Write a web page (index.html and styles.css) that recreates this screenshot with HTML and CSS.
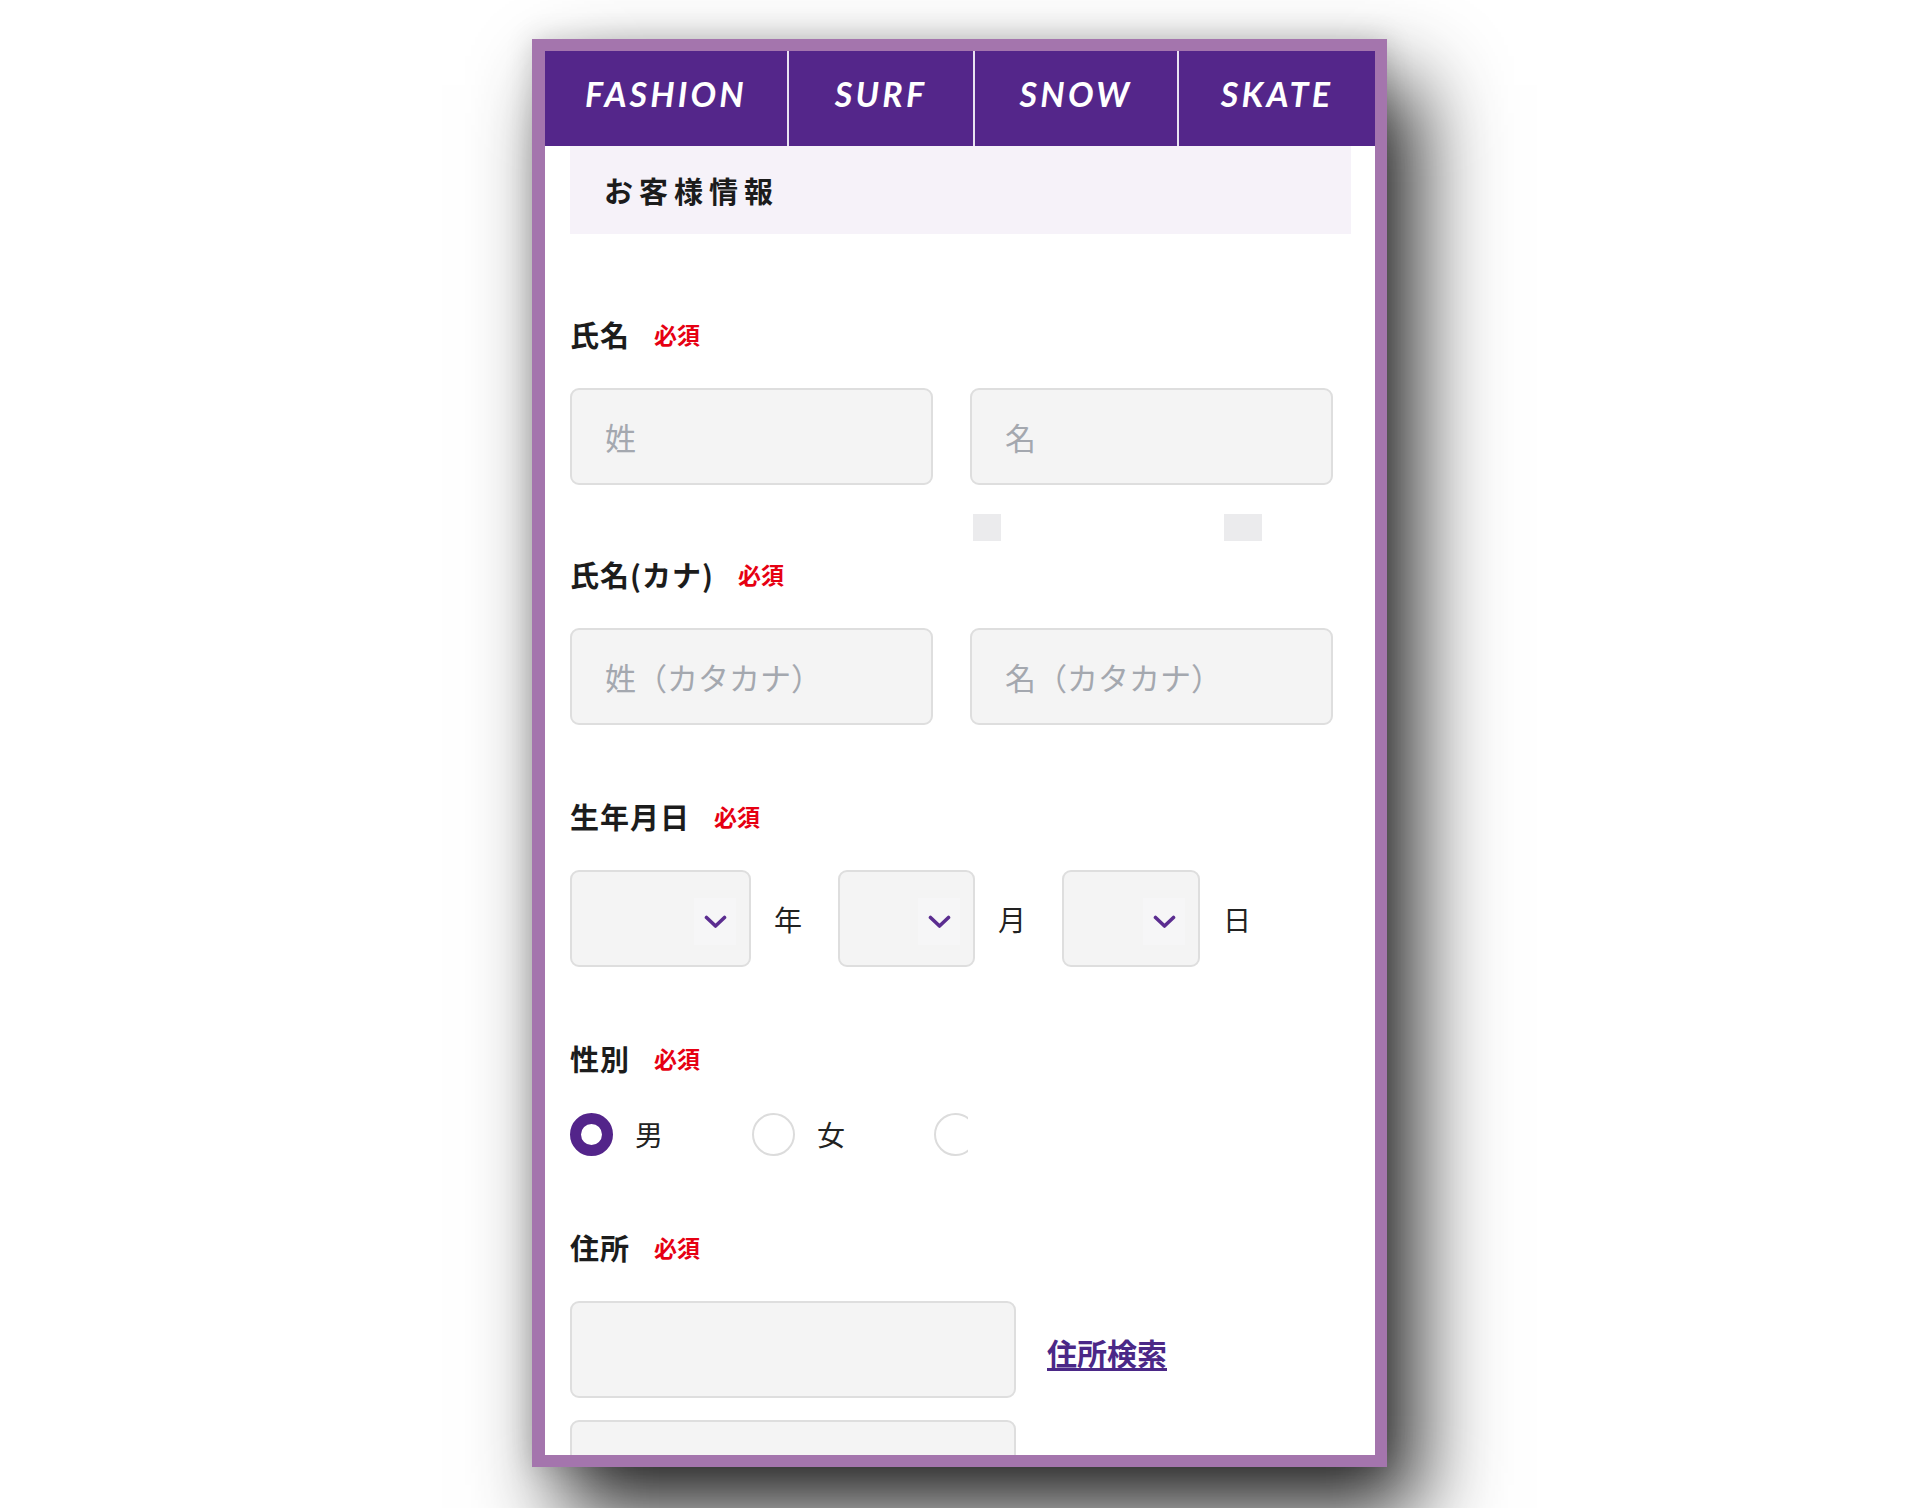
FILE: index.html
```html
<!DOCTYPE html>
<html lang="ja">
<head>
    <meta charset="UTF-8">
    <meta name="viewport" content="width=device-width, initial-scale=1.0">
    <title>お客様情報</title>
    <link rel="stylesheet" href="styles.css">
</head>
<body>
    <div class="page">
        <div class="frame">
            <nav class="nav">
                <a href="#">FASHION</a>
                <a href="#">SURF</a>
                <a href="#">SNOW</a>
                <a href="#">SKATE</a>
            </nav>

            <div class="content">
                <h2 class="section-title">お客様情報</h2>

                <div class="field field-first">
                    <p class="field-label">氏名<span class="req">必須</span></p>
                    <div class="row">
                        <input class="text-input" type="text" placeholder="姓">
                        <input class="text-input" type="text" placeholder="名">
                    </div>
                    <div class="marks">
                        <span class="mark mark-a"></span>
                        <span class="mark mark-b"></span>
                    </div>
                </div>

                <div class="field field-kana">
                    <p class="field-label">氏名(カナ)<span class="req">必須</span></p>
                    <div class="row">
                        <input class="text-input" type="text" placeholder="姓（カタカナ）">
                        <input class="text-input" type="text" placeholder="名（カタカナ）">
                    </div>
                </div>

                <div class="field">
                    <p class="field-label">生年月日<span class="req">必須</span></p>
                    <div class="row row-center">
                        <label class="select select-year">
                            <select><option></option></select>
                            <span class="chev"><svg width="23" height="14" viewBox="0 0 23 14"><polyline points="2.5,2.5 11.5,11 20.5,2.5" fill="none" stroke="#5b2d90" stroke-width="3.6" stroke-linecap="round" stroke-linejoin="round"/></svg></span>
                        </label>
                        <span class="unit">年</span>
                        <label class="select select-month">
                            <select><option></option></select>
                            <span class="chev"><svg width="23" height="14" viewBox="0 0 23 14"><polyline points="2.5,2.5 11.5,11 20.5,2.5" fill="none" stroke="#5b2d90" stroke-width="3.6" stroke-linecap="round" stroke-linejoin="round"/></svg></span>
                        </label>
                        <span class="unit">月</span>
                        <label class="select select-day">
                            <select><option></option></select>
                            <span class="chev"><svg width="23" height="14" viewBox="0 0 23 14"><polyline points="2.5,2.5 11.5,11 20.5,2.5" fill="none" stroke="#5b2d90" stroke-width="3.6" stroke-linecap="round" stroke-linejoin="round"/></svg></span>
                        </label>
                        <span class="unit unit-last">日</span>
                    </div>
                </div>

                <div class="field">
                    <p class="field-label">性別<span class="req">必須</span></p>
                    <div class="row radios">
                        <label class="radio-opt"><input type="radio" name="sex" checked>男</label>
                        <label class="radio-opt"><input type="radio" name="sex">女</label>
                        <label class="radio-opt radio-clip"><input type="radio" name="sex"></label>
                    </div>
                </div>

                <div class="field">
                    <p class="field-label">住所<span class="req">必須</span></p>
                    <div class="row row-center">
                        <input class="text-input address-input" type="text">
                        <a class="search-link" href="#">住所検索</a>
                    </div>
                    <input class="text-input address-input address-second" type="text">
                </div>
            </div>
        </div>
    </div>
</body>
</html>
```

FILE: styles.css
```css
body {
    margin: 0;
    background: #fff;
    font-family: "Noto Sans CJK JP", sans-serif;
    color: #1c1c1c;
}
.page {
    height: 1508px;
    padding: 39px 0 0 532px;
    box-sizing: border-box;
}
.frame {
    width: 830px;
    height: 1404px;
    border: 12px solid #a475ad;
    border-left-width: 13px;
    background: #fff;
    overflow: hidden;
    box-shadow: 30px 46px 80px rgba(0, 0, 0, 0.85), 0 0 26px rgba(0, 0, 0, 0.16);
}
.nav {
    display: grid;
    grid-template-columns: 242px 186px 204px 198px;
    height: 95px;
    background: #54268a;
}
.nav a {
    display: flex;
    align-items: center;
    justify-content: center;
    padding-bottom: 11px;
    border-left: 2px solid #e9e3f1;
    color: #fff;
    font: italic 700 34px "Lato", sans-serif;
    letter-spacing: 3.2px;
    text-decoration: none;
}
.nav a:first-child {
    border-left: 0;
}
.content {
    padding: 0 24px 0 25px;
}
.section-title {
    height: 88px;
    margin: 0;
    padding-left: 34px;
    background: #f6f2f9;
    font-size: 29px;
    font-weight: 700;
    line-height: 88px;
    letter-spacing: 6px;
}
.field {
    margin-top: 76px;
}
.field-first {
    margin-top: 85px;
}
.field-kana {
    margin-top: 18px;
}
.field-label {
    display: flex;
    align-items: center;
    height: 30px;
    margin: 0;
    font-size: 29px;
    font-weight: 700;
    letter-spacing: 1px;
}
.req {
    margin-left: 24px;
    font-size: 23px;
    color: #e60012;
    letter-spacing: 0;
}
.row {
    display: flex;
    margin-top: 39px;
}
.row-center {
    align-items: center;
}
.text-input {
    box-sizing: border-box;
    width: 363px;
    height: 97px;
    padding: 0 30px 0 33px;
    border: 2px solid #dedede;
    border-radius: 9px;
    background: #f4f4f4;
    font: 31px "Noto Sans CJK JP", sans-serif;
    color: #222;
    outline: none;
}
.text-input::placeholder {
    color: #a4a8af;
}
.text-input + .text-input {
    margin-left: 37px;
}
.marks {
    display: flex;
    height: 27px;
    margin-top: 29px;
    padding-left: 403px;
}
.mark {
    background: #ebebed;
}
.mark-a {
    width: 28px;
}
.mark-b {
    width: 38px;
    margin-left: 223px;
}

/* 生年月日 */
.select {
    position: relative;
    display: block;
    height: 97px;
}
.select-year {
    width: 181px;
}
.select-month {
    width: 137px;
}
.select-day {
    width: 138px;
}
.select select {
    box-sizing: border-box;
    width: 100%;
    height: 100%;
    border: 2px solid #dedede;
    border-radius: 9px;
    background: #f4f4f4;
    appearance: none;
    outline: none;
}
.chev {
    position: absolute;
    top: 28px;
    right: 15px;
    width: 42px;
    height: 47px;
    display: flex;
    align-items: center;
    justify-content: center;
    background: #f6f6f7;
}
.unit {
    margin: 0 36px 0 23px;
    font-size: 28px;
    color: #222;
}
.unit-last {
    margin-right: 0;
}

/* 性別 */
.radios {
    margin-top: 39px;
    height: 44px;
    align-items: center;
}
.radio-opt {
    display: flex;
    align-items: center;
    width: 182px;
    font-size: 28px;
    color: #222;
}
.radio-opt input {
    box-sizing: border-box;
    width: 43px;
    height: 43px;
    margin: 0 22px 0 0;
    border: 2px solid #dcdcdc;
    border-radius: 50%;
    background: #fff;
    appearance: none;
    flex-shrink: 0;
}
.radio-opt input:checked {
    border: 11px solid #53248a;
}
.radio-clip {
    width: 34px;
    overflow: hidden;
}

/* 住所 */
.address-input {
    width: 446px;
}
.search-link {
    margin: 4px 0 0 31px;
    font-size: 30px;
    font-weight: 700;
    color: #4b2887;
    text-decoration: underline;
    text-underline-offset: 3px;
}
.address-second {
    display: block;
    margin-top: 22px;
}
```
